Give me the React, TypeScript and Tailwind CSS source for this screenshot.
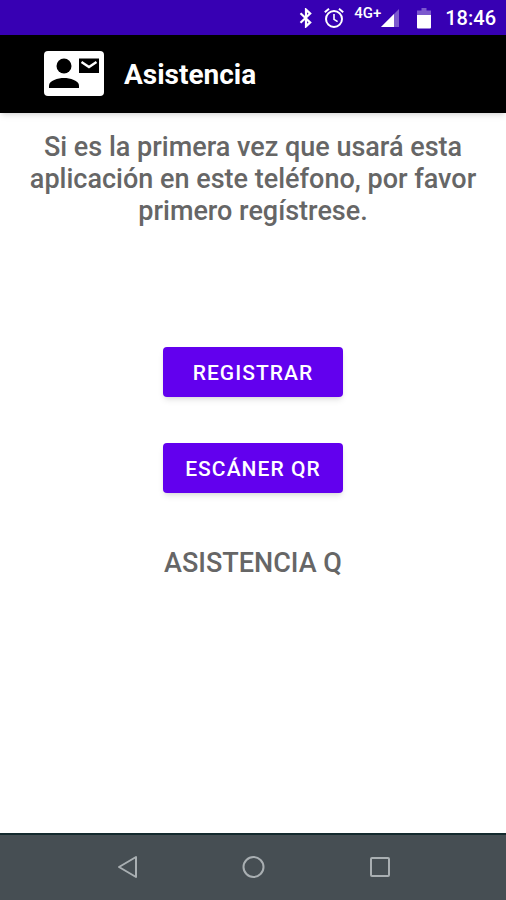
import type { ReactNode } from 'react';

function StatusBar() {
  return (
    <div className="flex h-[35px] items-center justify-end bg-[#3700b3] pr-[10px] text-white">
      {/* Bluetooth */}
      <svg className="mr-[10px] h-5 w-4" viewBox="0 0 16 20" fill="none" stroke="currentColor" strokeWidth="2.2">
        <path d="M2.5 5.2 12.2 14.4 8 18.4V1.6L12.2 5.6 2.5 14.8" />
      </svg>
      {/* Alarm */}
      <svg className="mr-[10px] h-6 w-5" viewBox="0 0 20 24" fill="none" stroke="currentColor">
        <circle cx="10" cy="13" r="8" strokeWidth="2" />
        <path d="M10 8v5.4l3.6 2.2" strokeWidth="1.6" />
        <path d="M.8 6.2 5 2.8M19.2 6.2 15 2.8" strokeWidth="2" />
      </svg>
      <span className="mb-[9px] text-[15px] leading-4 font-medium">4G+</span>
      {/* Signal */}
      <svg className="mr-[18px] h-5 w-[18px]" viewBox="0 0 18 20">
        <path d="M0 19 18 1v18z" fill="currentColor" fillOpacity="0.35" />
        <path d="M0 19 13 6v13z" fill="currentColor" />
      </svg>
      {/* Battery */}
      <svg className="mr-[14px] h-[22px] w-[14px]" viewBox="0 0 14 22" fill="currentColor">
        <path d="M4.500 1h5v2.500H14V8H0V3.500h4.500z" fillOpacity="0.35" />
        <path d="M0 8h14v12.500q0 1-1 1H1q-1 0-1-1z" />
      </svg>
      <span className="text-[20px] leading-6 font-medium">18:46</span>
    </div>
  );
}

function ContactMailLogo() {
  return (
    <svg className="h-[45px] w-[60px]" viewBox="0 0 60 45">
      <rect width="60" height="45" rx="4" fill="#fff" />
      <circle cx="20" cy="15" r="7.500" />
      <path d="M5 37v-2.500C5 29.500 14 27 20 27s15 2.500 15 7.500V37z" />
      <path d="M35 7.500h20V22H35z" />
      <path d="m37.500 11 7.500 5 7.500-5" fill="none" stroke="#fff" strokeWidth="2.400" />
    </svg>
  );
}

function ActionButton({ children }: { children: ReactNode }) {
  return (
    <button
      type="button"
      className="h-[50px] w-[180px] rounded-[4px] bg-[#6200ee] pt-[2px] text-[21px] leading-6 font-medium tracking-wider text-white uppercase shadow-md"
    >
      {children}
    </button>
  );
}

function NavBar() {
  return (
    <nav className="flex h-[67px] items-center justify-center gap-[102px] border-t-2 border-[#142a2e] bg-[#464e53] pb-[2px] text-[#a9afb2]">
      <button type="button" aria-label="Atrás">
        <svg className="h-6 w-6" viewBox="0 0 24 24" fill="none" stroke="currentColor" strokeWidth="2" strokeLinejoin="round">
          <path d="M21 2v20L4 12z" />
        </svg>
      </button>
      <button type="button" aria-label="Inicio">
        <svg className="h-6 w-6" viewBox="0 0 24 24" fill="none" stroke="currentColor" strokeWidth="2">
          <circle cx="12.5" cy="12" r="10" />
        </svg>
      </button>
      <button type="button" aria-label="Recientes">
        <svg className="h-6 w-6" viewBox="0 0 24 24" fill="none" stroke="currentColor" strokeWidth="2">
          <rect x="4" y="3" width="18" height="18" rx="1" />
        </svg>
      </button>
    </nav>
  );
}

export default function App() {
  return (
    <div className="flex min-h-screen flex-col bg-white font-['Roboto',sans-serif]">
      <StatusBar />

      <header className="flex h-[78px] items-center gap-5 bg-black px-11 pb-[2px] shadow-md">
        <ContactMailLogo />
        <h1 className="pt-1 text-[28px] leading-8 font-bold text-white">Asistencia</h1>
      </header>

      <main className="flex grow flex-col items-center px-5 pt-[18px] text-[#666]">
        <p className="text-center text-[27px] leading-8 font-medium">
          Si es la primera vez que usará esta aplicación en este teléfono, por favor primero regístrese.
        </p>
        <div className="mt-[120px] flex flex-col gap-[46px]">
          <ActionButton>Registrar</ActionButton>
          <ActionButton>Escáner QR</ActionButton>
        </div>
        <p className="mt-[54px] text-[27px] leading-8 font-medium">ASISTENCIA Q</p>
      </main>

      <NavBar />
    </div>
  );
}
